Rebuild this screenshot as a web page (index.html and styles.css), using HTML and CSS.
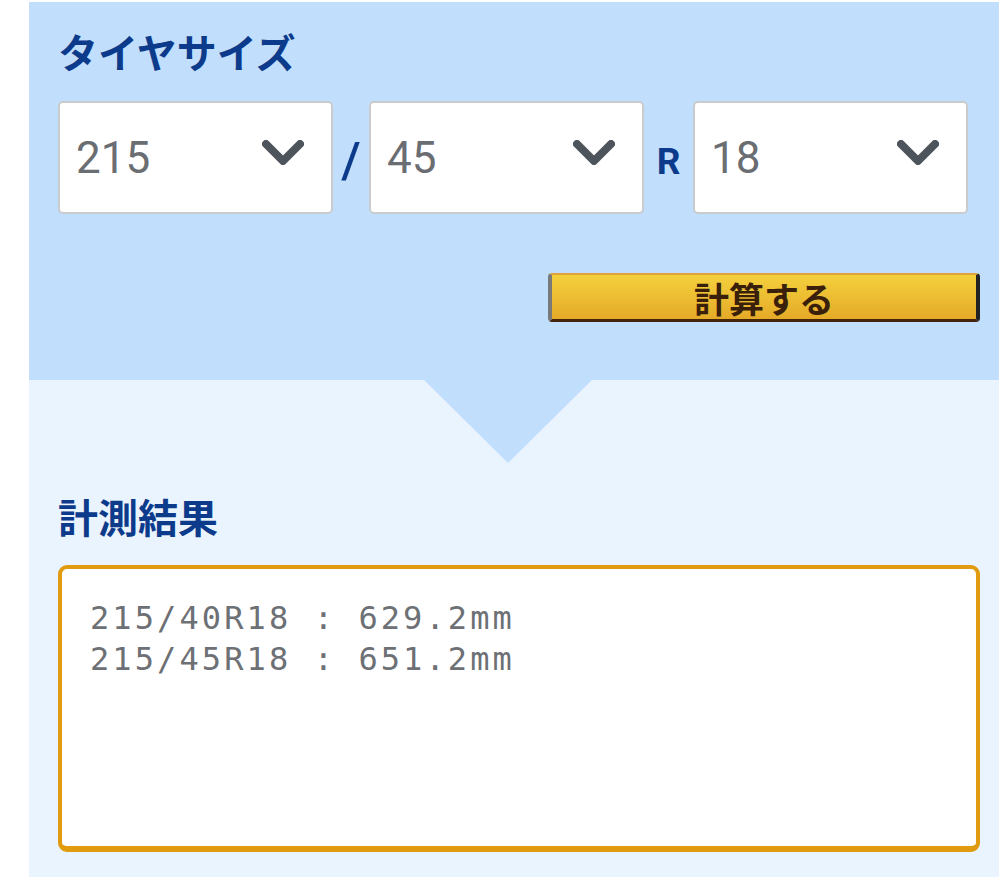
FILE: index.html
```html
<!DOCTYPE html>
<html lang="ja">
<head>
  <meta charset="UTF-8">
  <meta name="viewport" content="width=device-width, initial-scale=1.0">
  <title>タイヤ外径計算</title>
  <link rel="stylesheet" href="styles.css">
</head>
<body>
  <div class="page">
    <section class="size-panel">
      <h2 class="panel-title">タイヤサイズ</h2>
      <div class="size-row">
        <div class="size-select">
          <select id="width">
            <option>205</option>
            <option selected>215</option>
            <option>225</option>
          </select>
          <svg class="chevron" width="42" height="25" viewBox="0 0 42 25"><path d="M4 4 L21 21 L38 4" /></svg>
        </div>
        <span class="size-sep">/</span>
        <div class="size-select">
          <select id="ratio">
            <option>40</option>
            <option selected>45</option>
            <option>50</option>
          </select>
          <svg class="chevron" width="42" height="25" viewBox="0 0 42 25"><path d="M4 4 L21 21 L38 4" /></svg>
        </div>
        <span class="size-sep size-sep-r">R</span>
        <div class="size-select">
          <select id="rim">
            <option>17</option>
            <option selected>18</option>
            <option>19</option>
          </select>
          <svg class="chevron" width="42" height="25" viewBox="0 0 42 25"><path d="M4 4 L21 21 L38 4" /></svg>
        </div>
      </div>
      <div class="calc-row">
        <button class="calc-button" onclick="calculate()">計算する</button>
      </div>
    </section>

    <section class="result-panel">
      <h2 class="panel-title">計測結果</h2>
      <textarea id="result" class="result-box" readonly>215/40R18 : 629.2mm
215/45R18 : 651.2mm</textarea>
    </section>
  </div>

  <script>
    // outer diameter = rim(inch) * 25.4 + width * ratio% * 2
    function diameter(w, r, rim) {
      return (rim * 25.4 + w * r / 100 * 2).toFixed(1);
    }

    function calculate() {
      const w = Number(document.getElementById('width').value);
      const r = Number(document.getElementById('ratio').value);
      const rim = Number(document.getElementById('rim').value);
      const box = document.getElementById('result');
      const line = `${w}/${r}R${rim} : ${diameter(w, r, rim)}mm`;
      box.value = box.value ? box.value.split('\n').slice(-1)[0] + '\n' + line : line;
    }
  </script>
</body>
</html>
```

FILE: styles.css
```css
body {
  margin: 0;
  background-color: #ffffff;
  font-family: Roboto, "Noto Sans CJK JP", sans-serif;
}

.page {
  margin-left: 29px;
  padding-top: 2px;
}

.panel-title {
  margin: 0;
  font-family: "Noto Sans CJK JP", sans-serif;
  font-size: 40px;
  line-height: 48px;
  font-weight: 700;
  color: #0d3b8c;
}

/* upper block: tyre size pickers */
.size-panel {
  background-color: #c1dffc;
  padding: 25px 19px 58px 29px;
}

.size-row {
  display: flex;
  align-items: center;
  margin-top: 26px;
}

.size-select {
  position: relative;
  width: 275px;
  height: 113px;
}

.size-select select {
  appearance: none;
  -webkit-appearance: none;
  width: 100%;
  height: 100%;
  padding: 0 0 0 16px;
  background-color: #ffffff;
  border: 2px solid #c9cbcd;
  border-radius: 5px;
  font-family: Roboto, sans-serif;
  font-size: 44px;
  color: #6a6d71;
  outline: none;
}

.chevron {
  position: absolute;
  top: 39px;
  right: 29px;
  pointer-events: none;
}

.chevron path {
  fill: none;
  stroke: #4e545b;
  stroke-width: 8;
  stroke-linecap: round;
  stroke-linejoin: round;
}

.size-sep {
  width: 36px;
  text-align: center;
  font-family: Roboto, sans-serif;
  font-size: 50px;
  font-weight: 500;
  color: #0d3b8c;
  padding-top: 6px;
}

.size-sep-r {
  width: 49px;
  font-size: 37px;
  font-weight: 700;
  padding-top: 8px;
}

.calc-row {
  display: flex;
  justify-content: flex-end;
  margin-top: 59px;
}

.calc-button {
  width: 432px;
  height: 49px;
  padding: 0;
  background: linear-gradient(#f4d03d, #e5aa27);
  border-top: 2px solid #e4a23a;
  border-left: 4px solid #797979;
  border-right: 4px solid #222222;
  border-bottom: 3px solid #44250b;
  border-radius: 4px;
  font-family: "Noto Sans CJK JP", sans-serif;
  font-size: 35px;
  font-weight: 700;
  line-height: 1;
  color: #3a1f0a;
  cursor: pointer;
}

/* lower block: results */
.result-panel {
  position: relative;
  background-color: #eaf4fe;
  padding: 112px 19px 25px 29px;
}

.result-panel::before {
  content: "";
  position: absolute;
  top: 0;
  left: 395px;
  border-left: 84px solid transparent;
  border-right: 84px solid transparent;
  border-top: 83px solid #c1dffc;
}

.result-box {
  display: block;
  box-sizing: border-box;
  width: 922px;
  height: 287px;
  margin-top: 25px;
  padding: 29px 28px;
  background-color: #ffffff;
  border: 4px solid #e09b10;
  border-bottom-width: 6px;
  border-radius: 9px;
  font-family: "DejaVu Sans Mono", monospace;
  font-size: 32px;
  line-height: 41px;
  letter-spacing: 3.1px;
  color: #6d7074;
  resize: none;
  outline: none;
}
```
